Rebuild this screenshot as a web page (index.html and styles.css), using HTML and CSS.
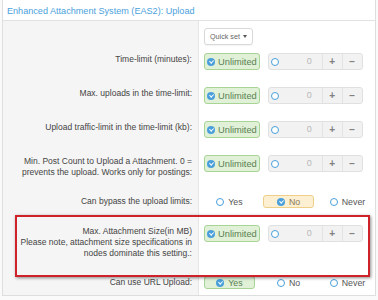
FILE: index.html
```html
<!DOCTYPE html>
<html lang="en">
<head>
  <meta charset="UTF-8" />
  <title>EAS2: Upload</title>
  <link rel="stylesheet" href="styles.css">
</head>
<body>
  <div class="block">
    <h2 class="block-header">Enhanced Attachment System (EAS2): Upload</h2>

    <div class="row row-quick">
      <div class="row-label"></div>
      <div class="row-ctrl">
        <button class="quick-set">Quick set <span class="caret"></span></button>
      </div>
    </div>

    <div class="row">
      <div class="row-label">Time-limit (minutes):</div>
      <div class="row-ctrl">
        <span class="toggle"><i class="check"></i>Unlimited</span>
        <span class="spin">
          <span class="spin-radio"><i class="radio"></i></span>
          <span class="spin-value">0</span>
          <span class="spin-btn">+</span>
          <span class="spin-btn">&minus;</span>
        </span>
      </div>
    </div>

    <div class="row">
      <div class="row-label">Max. uploads in the time-limit:</div>
      <div class="row-ctrl">
        <span class="toggle"><i class="check"></i>Unlimited</span>
        <span class="spin">
          <span class="spin-radio"><i class="radio"></i></span>
          <span class="spin-value">0</span>
          <span class="spin-btn">+</span>
          <span class="spin-btn">&minus;</span>
        </span>
      </div>
    </div>

    <div class="row">
      <div class="row-label">Upload traffic-limit in the time-limit (kb):</div>
      <div class="row-ctrl">
        <span class="toggle"><i class="check"></i>Unlimited</span>
        <span class="spin">
          <span class="spin-radio"><i class="radio"></i></span>
          <span class="spin-value">0</span>
          <span class="spin-btn">+</span>
          <span class="spin-btn">&minus;</span>
        </span>
      </div>
    </div>

    <div class="row">
      <div class="row-label">Min. Post Count to Upload a Attachment. 0 = prevents the upload. Works only for postings:</div>
      <div class="row-ctrl">
        <span class="toggle"><i class="check"></i>Unlimited</span>
        <span class="spin">
          <span class="spin-radio"><i class="radio"></i></span>
          <span class="spin-value">0</span>
          <span class="spin-btn">+</span>
          <span class="spin-btn">&minus;</span>
        </span>
      </div>
    </div>

    <div class="row">
      <div class="row-label">Can bypass the upload limits:</div>
      <div class="row-ctrl">
        <span class="choice"><i class="radio"></i>Yes</span>
        <span class="choice choice-no"><i class="check"></i>No</span>
        <span class="choice"><i class="radio"></i>Never</span>
      </div>
    </div>

    <div class="row">
      <div class="row-label">Max. Attachment Size(in MB)<br>Please note, attachment size specifications in nodes dominate this setting.:</div>
      <div class="row-ctrl">
        <span class="toggle"><i class="check"></i>Unlimited</span>
        <span class="spin">
          <span class="spin-radio"><i class="radio"></i></span>
          <span class="spin-value">0</span>
          <span class="spin-btn">+</span>
          <span class="spin-btn">&minus;</span>
        </span>
      </div>
    </div>

    <div class="row row-last">
      <div class="row-label">Can use URL Upload:</div>
      <div class="row-ctrl">
        <span class="choice choice-yes"><i class="check"></i>Yes</span>
        <span class="choice"><i class="radio"></i>No</span>
        <span class="choice"><i class="radio"></i>Never</span>
      </div>
    </div>

    <div class="mark"></div>
  </div>
</body>
</html>
```

FILE: styles.css
```css
html, body {
  margin: 0;
  padding: 0;
}

body {
  background: #fafafa;
  font-family: "Liberation Sans", Arial, sans-serif;
  color: #444;
  overflow: hidden;
}

.block {
  position: relative;
  margin: 0 2px;
  background: #fff;
  border: 1px solid #dedede;
  border-top: 0;
}

.block-header {
  margin: 0;
  height: 20px;
  padding: 0 4px;
  border-bottom: 1px solid #e2e2e2;
  font-size: 9.1px;
  font-weight: normal;
  line-height: 22px;
  color: #4aa1dc;
}

.row {
  display: flex;
}

.row-label {
  flex: none;
  width: 179px;
  padding: 9px 6px 9px 10px;
  border-right: 1px solid #e6e6e6;
  background: #f5f5f5;
  font-size: 8.5px;
  line-height: 11px;
  text-align: right;
}

.row-ctrl {
  flex: 1;
  display: flex;
  align-items: flex-start;
  gap: 8px;
  padding: 8px 0 9px 5px;
}

.row-quick .row-label,
.row-quick .row-ctrl {
  padding-top: 7px;
  padding-bottom: 0;
}

.row-last .row-label {
  padding-bottom: 6px;
}

.row-last .row-ctrl {
  padding-bottom: 6px;
}

/* quick set */
.quick-set {
  display: flex;
  align-items: center;
  gap: 3px;
  height: 17px;
  padding: 0 5px;
  border: 1px solid #d9d9d9;
  border-radius: 3px;
  background: #fff;
  box-shadow: 0 1px 1px rgba(0, 0, 0, 0.05);
  font-family: "Liberation Sans", Arial, sans-serif;
  font-size: 7.2px;
  color: #666;
}

.caret {
  width: 0;
  height: 0;
  border-top: 3px solid #555;
  border-left: 2px solid transparent;
  border-right: 2px solid transparent;
}

/* icons */
.radio, .check {
  display: inline-block;
  flex: none;
  box-sizing: border-box;
  width: 8px;
  height: 8px;
  border-radius: 50%;
}

.radio {
  border: 1.4px solid #4a9fdb;
  background: #fff;
}

.check {
  position: relative;
  background: #4a9fdb;
}

.check::after {
  content: "";
  position: absolute;
  left: 2.7px;
  top: 1.2px;
  width: 1.6px;
  height: 3.4px;
  border: solid #fff;
  border-width: 0 1.2px 1.2px 0;
  transform: rotate(45deg);
}

/* unlimited toggle */
.toggle {
  display: inline-flex;
  align-items: center;
  gap: 3px;
  box-sizing: border-box;
  height: 17px;
  padding: 0 2px;
  border: 1px solid #a8d595;
  border-radius: 3px;
  background: #e0f1d7;
  color: #5a7f52;
  font-size: 9.3px;
}

/* number box */
.spin {
  display: flex;
  box-sizing: border-box;
  width: 95px;
  height: 17px;
  border: 1px solid #e0e0e0;
  border-radius: 3px;
  background: #f2f2f2;
}

.spin-radio {
  display: flex;
  align-items: center;
  justify-content: center;
  width: 13px;
}

.spin-value {
  flex: 1;
  padding-right: 10px;
  text-align: right;
  font-size: 9px;
  line-height: 15px;
  color: #b8b8b8;
}

.spin-btn {
  width: 19px;
  border-left: 1px solid #e3e3e3;
  text-align: center;
  font-size: 10px;
  font-weight: bold;
  line-height: 15px;
  color: #808080;
}

/* radio choices */
.choice {
  display: flex;
  align-items: center;
  justify-content: center;
  gap: 4px;
  box-sizing: border-box;
  width: 51px;
  height: 13px;
  border: 1px solid transparent;
  border-radius: 3px;
  font-size: 8.8px;
  color: #555;
}

.choice-yes {
  border-color: #a8d595;
  background: #e0f1d7;
  color: #5a7f52;
}

.choice-no {
  border-color: #efcf88;
  background: #fcefd2;
  color: #8a7a56;
}

/* red highlight drawn over the form */
.mark {
  position: absolute;
  top: 215px;
  left: 12px;
  width: 351px;
  height: 58px;
  border: 2px solid #cf2129;
  box-shadow: 1px 1px 3px rgba(0, 0, 0, 0.45);
  pointer-events: none;
}
```
